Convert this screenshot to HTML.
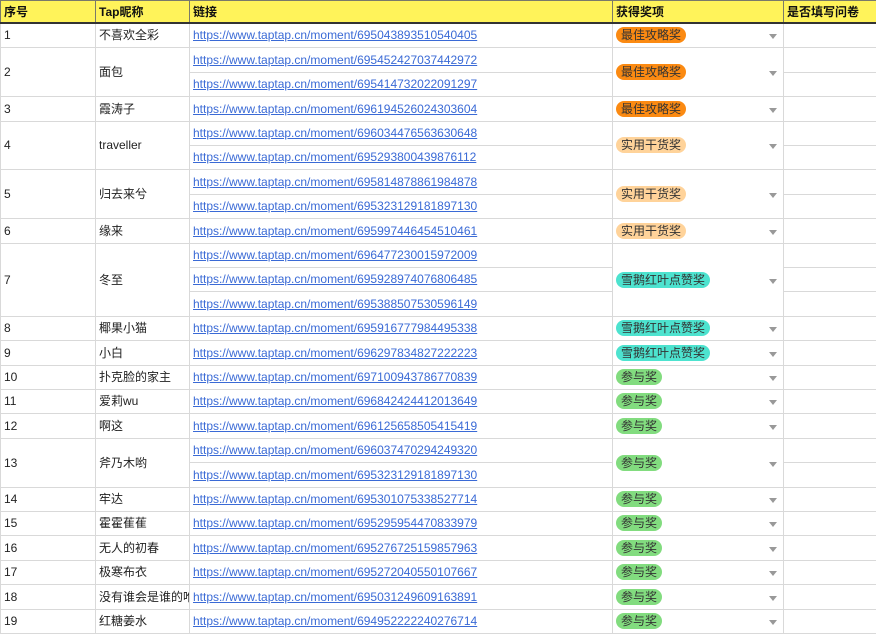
<!DOCTYPE html>
<html><head><meta charset="utf-8"><style>
body{margin:0;width:876px;height:633px;overflow:hidden;background:#fff;font-family:"Liberation Sans","Noto Sans CJK SC",sans-serif;font-size:12px;color:#222}
table{border-collapse:collapse;table-layout:fixed;width:877px}
td{border:1px solid #d9d9d9;padding:0 0 0 3px;white-space:nowrap;overflow:hidden;vertical-align:middle;line-height:14px}
th{background:#fff35a;height:21px;border:1px solid #7a7a6a;border-bottom:2px solid #333;text-align:left;padding:0 0 0 3px;font-weight:bold;font-size:12px;color:#111}
a{color:#3a6ad6;text-decoration:underline}
.aw{position:relative;padding-left:3px}
.aw:after{content:"";position:absolute;right:6px;top:50%;margin-top:-1px;border-left:4px solid transparent;border-right:4px solid transparent;border-top:5px solid #999}
.p{display:inline-block;height:16px;line-height:16px;border-radius:8px;padding:0 5px;color:#333}
.o{background:#fb8a12}.l{background:#ffd39a}.t{background:#4de3cf}.g{background:#82dc7f}
</style></head><body>
<table>
<colgroup><col style="width:95px"><col style="width:94px"><col style="width:423px"><col style="width:171px"><col style="width:94px"></colgroup>
<tr><th>序号</th><th>Tap昵称</th><th>链接</th><th>获得奖项</th><th>是否填写问卷</th></tr>
<tr style="height:24px"><td>1</td><td>不喜欢全彩</td><td><a>https://www.taptap.cn/moment/695043893510540405</a></td><td class="aw"><span class="p o">最佳攻略奖</span></td><td></td></tr>
<tr style="height:25px"><td rowspan="2">2</td><td rowspan="2">面包</td><td><a>https://www.taptap.cn/moment/695452427037442972</a></td><td class="aw" rowspan="2"><span class="p o">最佳攻略奖</span></td><td></td></tr>
<tr style="height:24px"><td><a>https://www.taptap.cn/moment/695414732022091297</a></td><td></td></tr>
<tr style="height:25px"><td>3</td><td>霞涛子</td><td><a>https://www.taptap.cn/moment/696194526024303604</a></td><td class="aw"><span class="p o">最佳攻略奖</span></td><td></td></tr>
<tr style="height:24px"><td rowspan="2">4</td><td rowspan="2">traveller</td><td><a>https://www.taptap.cn/moment/696034476563630648</a></td><td class="aw" rowspan="2"><span class="p l">实用干货奖</span></td><td></td></tr>
<tr style="height:24px"><td><a>https://www.taptap.cn/moment/695293800439876112</a></td><td></td></tr>
<tr style="height:25px"><td rowspan="2">5</td><td rowspan="2">归去来兮</td><td><a>https://www.taptap.cn/moment/695814878861984878</a></td><td class="aw" rowspan="2"><span class="p l">实用干货奖</span></td><td></td></tr>
<tr style="height:24px"><td><a>https://www.taptap.cn/moment/695323129181897130</a></td><td></td></tr>
<tr style="height:25px"><td>6</td><td>缘来</td><td><a>https://www.taptap.cn/moment/695997446454510461</a></td><td class="aw"><span class="p l">实用干货奖</span></td><td></td></tr>
<tr style="height:24px"><td rowspan="3">7</td><td rowspan="3">冬至</td><td><a>https://www.taptap.cn/moment/696477230015972009</a></td><td class="aw" rowspan="3"><span class="p t">雪鹅红叶点赞奖</span></td><td></td></tr>
<tr style="height:24px"><td><a>https://www.taptap.cn/moment/695928974076806485</a></td><td></td></tr>
<tr style="height:25px"><td><a>https://www.taptap.cn/moment/695388507530596149</a></td><td></td></tr>
<tr style="height:24px"><td>8</td><td>椰果小猫</td><td><a>https://www.taptap.cn/moment/695916777984495338</a></td><td class="aw"><span class="p t">雪鹅红叶点赞奖</span></td><td></td></tr>
<tr style="height:25px"><td>9</td><td>小白</td><td><a>https://www.taptap.cn/moment/696297834827222223</a></td><td class="aw"><span class="p t">雪鹅红叶点赞奖</span></td><td></td></tr>
<tr style="height:24px"><td>10</td><td>扑克脸的家主</td><td><a>https://www.taptap.cn/moment/697100943786770839</a></td><td class="aw"><span class="p g">参与奖</span></td><td></td></tr>
<tr style="height:24px"><td>11</td><td>爱莉wu</td><td><a>https://www.taptap.cn/moment/696842424412013649</a></td><td class="aw"><span class="p g">参与奖</span></td><td></td></tr>
<tr style="height:25px"><td>12</td><td>啊这</td><td><a>https://www.taptap.cn/moment/696125658505415419</a></td><td class="aw"><span class="p g">参与奖</span></td><td></td></tr>
<tr style="height:24px"><td rowspan="2">13</td><td rowspan="2">斧乃木哟</td><td><a>https://www.taptap.cn/moment/696037470294249320</a></td><td class="aw" rowspan="2"><span class="p g">参与奖</span></td><td></td></tr>
<tr style="height:25px"><td><a>https://www.taptap.cn/moment/695323129181897130</a></td><td></td></tr>
<tr style="height:24px"><td>14</td><td>牢达</td><td><a>https://www.taptap.cn/moment/695301075338527714</a></td><td class="aw"><span class="p g">参与奖</span></td><td></td></tr>
<tr style="height:24px"><td>15</td><td>霍霍萑萑</td><td><a>https://www.taptap.cn/moment/695295954470833979</a></td><td class="aw"><span class="p g">参与奖</span></td><td></td></tr>
<tr style="height:25px"><td>16</td><td>无人的初春</td><td><a>https://www.taptap.cn/moment/695276725159857963</a></td><td class="aw"><span class="p g">参与奖</span></td><td></td></tr>
<tr style="height:24px"><td>17</td><td>极寒布衣</td><td><a>https://www.taptap.cn/moment/695272040550107667</a></td><td class="aw"><span class="p g">参与奖</span></td><td></td></tr>
<tr style="height:25px"><td>18</td><td>没有谁会是谁的唯一</td><td><a>https://www.taptap.cn/moment/695031249609163891</a></td><td class="aw"><span class="p g">参与奖</span></td><td></td></tr>
<tr style="height:24px"><td>19</td><td>红糖姜水</td><td><a>https://www.taptap.cn/moment/694952222240276714</a></td><td class="aw"><span class="p g">参与奖</span></td><td></td></tr>
</table>
</body></html>
